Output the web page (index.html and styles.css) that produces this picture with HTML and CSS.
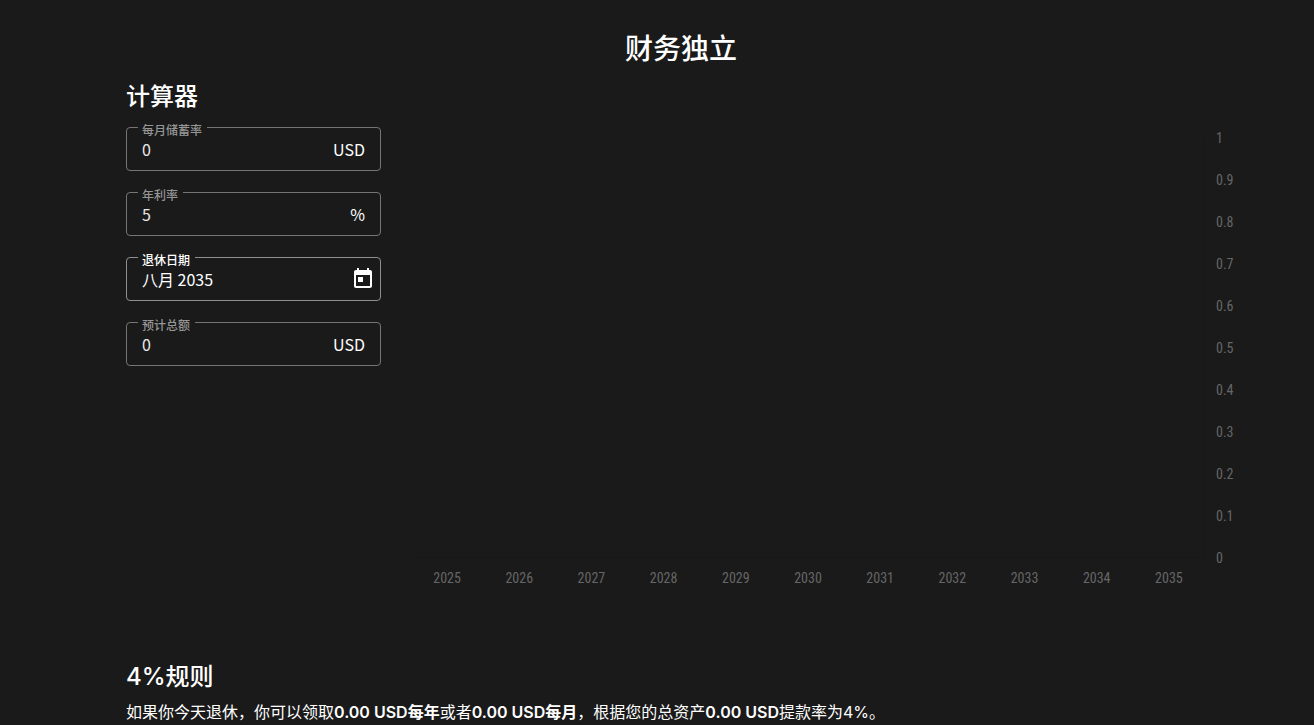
FILE: index.html
```html
<!DOCTYPE html>
<html lang="zh-CN">
<head>
<meta charset="utf-8">
<meta name="viewport" content="width=device-width, initial-scale=1">
<title>财务独立</title>
<link rel="stylesheet" href="styles.css">
</head>
<body>
<main class="page">
  <h1 class="title">财务独立</h1>
  <div class="columns">
    <section class="calculator">
      <h2 class="heading">计算器</h2>
      <form class="form">
        <div class="field">
          <label class="label" for="savings">每月储蓄率</label>
          <input class="input" id="savings" type="text" inputmode="decimal" value="0">
          <span class="suffix">USD</span>
        </div>
        <div class="field">
          <label class="label" for="rate">年利率</label>
          <input class="input" id="rate" type="text" inputmode="decimal" value="5">
          <span class="suffix">%</span>
        </div>
        <div class="field field-date">
          <label class="label" for="date">退休日期</label>
          <input class="input" id="date" type="text" value="八月 2035" readonly>
          <button class="calendar" type="button" aria-label="选择日期">
            <svg viewBox="0 0 24 24" width="24" height="24" fill="currentColor" aria-hidden="true"><path d="M19 3h-1V1h-2v2H8V1H6v2H5c-1.11 0-1.99.9-1.99 2L3 19c0 1.1.89 2 2 2h14c1.1 0 2-.9 2-2V5c0-1.1-.9-2-2-2zm0 16H5V8h14v11zM7 10h5v5H7z"/></svg>
          </button>
        </div>
        <div class="field">
          <label class="label" for="total">预计总额</label>
          <input class="input" id="total" type="text" inputmode="decimal" value="0">
          <span class="suffix">USD</span>
        </div>
      </form>
    </section>
    <section class="chart" aria-label="财务预测图">
      <div class="plot"></div>
      <div class="y-axis">
        <span>1</span><span>0.9</span><span>0.8</span><span>0.7</span><span>0.6</span><span>0.5</span><span>0.4</span><span>0.3</span><span>0.2</span><span>0.1</span><span>0</span>
      </div>
      <div class="x-axis">
        <span>2025</span><span>2026</span><span>2027</span><span>2028</span><span>2029</span><span>2030</span><span>2031</span><span>2032</span><span>2033</span><span>2034</span><span>2035</span>
      </div>
    </section>
  </div>
  <section class="rule">
    <h2 class="heading">4%规则</h2>
    <p class="text">如果你今天退休，你可以领取<strong>0.00 USD每年</strong>或者<strong>0.00 USD每月</strong>，根据您的总资产<strong>0.00 USD</strong>提款率为4%。</p>
  </section>
</main>
</body>
</html>
```
FILE: styles.css
```css
* { box-sizing: border-box; }

body {
  margin: 0;
  background: #1a1a1a;
  color: #fff;
  font: 400 16px/24px Inter, "Noto Sans CJK SC", sans-serif;
}

.page { padding: 29px 78px 0 126px; }

.title {
  margin: 0;
  font-size: 28px;
  line-height: 40px;
  font-weight: 500;
  text-align: center;
}

.heading {
  margin: 0;
  font-size: 24px;
  line-height: 32px;
  font-weight: 500;
}

.columns {
  display: grid;
  grid-template-columns: 255px 1fr;
  gap: 30px;
  padding-top: 12px;
}

.form {
  display: grid;
  gap: 21px;
  margin-top: 14px;
}

.field {
  position: relative;
  display: flex;
  align-items: center;
  height: 44px;
  padding: 0 15px;
  border: 1px solid #757575;
  border-radius: 4px;
  font: 400 16px/24px "Noto Sans CJK SC", sans-serif;
}

.field-date {
  padding-right: 5px;
  border-color: #8f8f8f;
}

.label {
  position: absolute;
  top: -7px;
  left: 11px;
  padding: 0 5px 0 4px;
  background: #1a1a1a;
  color: #969696;
  font-size: 12px;
  line-height: 18px;
  font-weight: 500;
}

.field-date .label { color: #fff; }

.input {
  flex: 1;
  min-width: 0;
  padding: 0;
  border: 0;
  outline: 0;
  background: transparent;
  color: #e8e8e8;
  font: inherit;
  line-height: 24px;
}

.field-date .input { color: #fff; }

.calendar {
  display: flex;
  padding: 0;
  border: 0;
  background: none;
  color: #fff;
}

.chart {
  display: grid;
  grid-template-columns: 1fr 31px;
  grid-template-rows: 420px auto;
  padding-top: 57px;
  color: #666;
  font: 400 14px/20px "Roboto Condensed", "Liberation Sans", sans-serif;
}

.plot {
  margin-left: 4px;
  border-right: 1px solid #171717;
  border-bottom: 1px solid #171717;
}

.y-axis {
  display: flex;
  flex-direction: column;
  justify-content: space-between;
  margin: -10px 0;
  padding-left: 11px;
}

.x-axis {
  display: grid;
  grid-template-columns: repeat(11, 1fr);
  padding-top: 10px;
  text-align: center;
}

.rule { padding-top: 73px; }

.text { margin: 7px 0 0; }
.text strong { font-weight: 600; }
```
